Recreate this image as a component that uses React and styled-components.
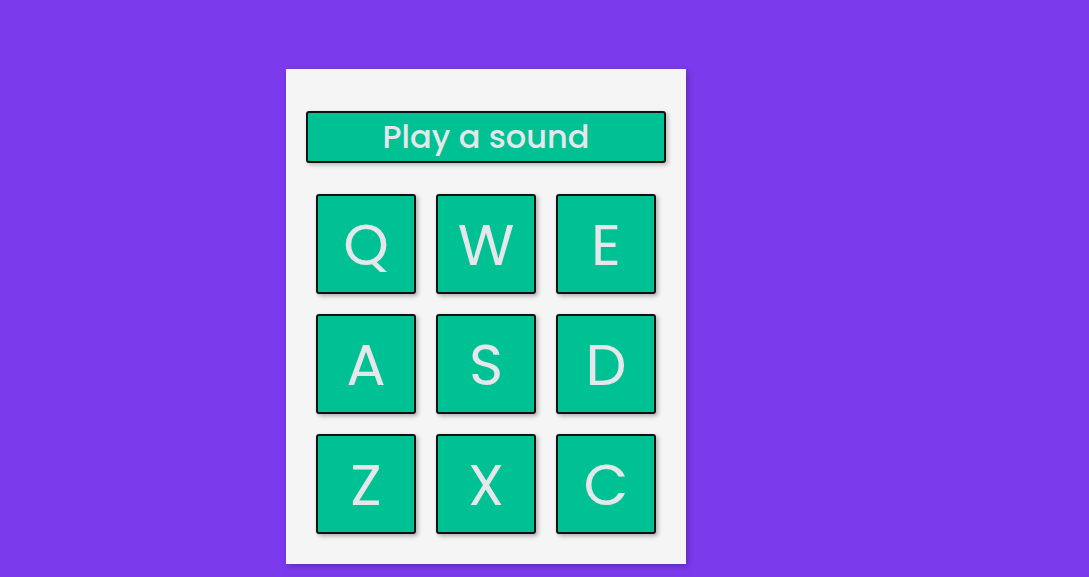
import React from 'react';
import styled, { createGlobalStyle } from 'styled-components';

const GlobalStyle = createGlobalStyle`
  * {
    box-sizing: border-box;
  }

  body {
    margin: 0;
    background-color: #7c3aed;
    font-family: "Poppins", "Lato", "Noto Sans", sans-serif;
  }
`;

const Page = styled.div`
  min-height: 100vh;
  padding: 69px 0 0 286px;
`;

const Card = styled.div`
  width: 400px;
  height: 495px;
  background-color: #f5f5f5;
  padding: 42px 20px 30px;
  box-shadow: 2px 2px 6px rgba(0, 0, 0, 0.25);
  display: flex;
  flex-direction: column;
  align-items: center;
`;

const PlayButton = styled.button`
  width: 360px;
  height: 52px;
  border: 2px solid #111;
  border-radius: 3px;
  background-color: #00c194;
  color: #e5e7eb;
  font-family: inherit;
  font-size: 32px;
  font-weight: 500;
  line-height: 1;
  padding: 0;
  box-shadow: 2px 2px 4px rgba(0, 0, 0, 0.25);
  cursor: pointer;
`;

const KeyGrid = styled.div`
  margin-top: 31px;
  display: grid;
  grid-template-columns: repeat(3, 100px);
  grid-auto-rows: 100px;
  gap: 20px;
`;

const Key = styled.button`
  border: 2px solid #111;
  border-radius: 3px;
  background-color: #00c194;
  color: #e5e7eb;
  font-family: inherit;
  font-size: 58px;
  font-weight: 400;
  display: flex;
  align-items: center;
  justify-content: center;
  box-shadow: 2px 2px 4px rgba(0, 0, 0, 0.3);
  cursor: pointer;
  padding: 0;
`;

const keys = ['Q', 'W', 'E', 'A', 'S', 'D', 'Z', 'X', 'C'];

const App = () => {
  return (
    <Page>
      <GlobalStyle />
      <Card>
        <PlayButton>Play a sound</PlayButton>
        <KeyGrid>
          {keys.map((k) => (
            <Key key={k}>{k}</Key>
          ))}
        </KeyGrid>
      </Card>
    </Page>
  );
};

export default App;
